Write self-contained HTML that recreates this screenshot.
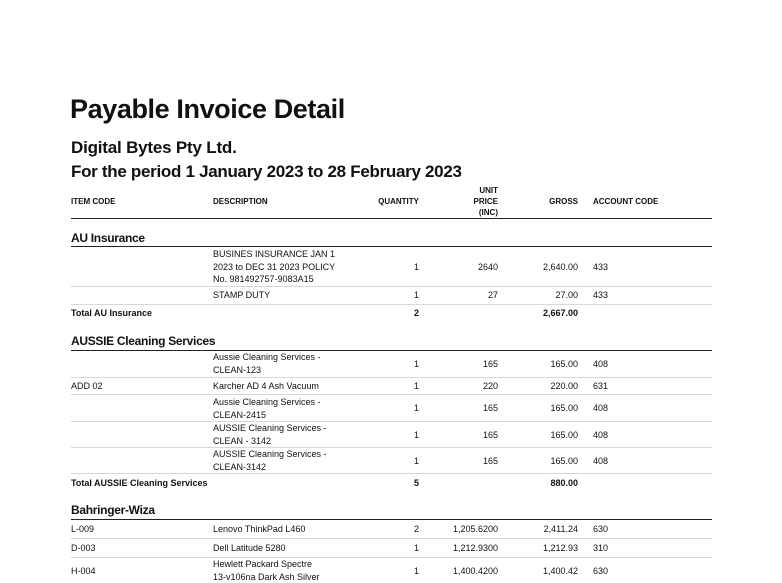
<!DOCTYPE html>
<html><head><meta charset="utf-8"><style>
body{margin:0;width:782px;height:581px;overflow:hidden;background:#fff;font-family:"Liberation Sans",sans-serif;color:#111;position:relative}
div{position:absolute;white-space:nowrap}
.t{font-size:9px;line-height:12px}
.b{font-weight:bold}
.r{text-align:right}
.hl{left:71px;width:641px;height:1px;background:#222}
.gl{left:71px;width:641px;height:1px;background:#d8d8d8}
.sec{font-size:12px;font-weight:bold;left:71px;letter-spacing:-0.3px}
</style></head><body>
<div style="left:70px;top:94px;font-size:27px;font-weight:bold;letter-spacing:-0.4px">Payable Invoice Detail</div>
<div style="left:71px;top:138px;font-size:17px;font-weight:bold;letter-spacing:-0.2px">Digital Bytes Pty Ltd.</div>
<div style="left:71px;top:162px;font-size:17px;font-weight:bold;letter-spacing:-0.3px">For the period 1 January 2023 to 28 February 2023</div>

<div class="t b" style="left:71px;top:196px;font-size:8px">ITEM CODE</div>
<div class="t b" style="left:213px;top:196px;font-size:8px">DESCRIPTION</div>
<div class="t b r" style="left:360px;width:59px;top:196px;font-size:8px">QUANTITY</div>
<div class="t b r" style="left:440px;width:58px;top:185px;font-size:8px;line-height:11px">UNIT<br>PRICE<br>(INC)</div>
<div class="t b r" style="left:520px;width:58px;top:196px;font-size:8px">GROSS</div>
<div class="t b" style="left:593px;top:196px;font-size:8px">ACCOUNT CODE</div>
<div class="hl" style="top:218px"></div>

<div class="sec" style="top:231px">AU Insurance</div>
<div class="hl" style="top:246px"></div>
<div class="t" style="left:213px;top:248px;line-height:12.5px">BUSINES INSURANCE JAN 1<br>2023 to DEC 31 2023 POLICY<br>No. 981492757-9083A15</div>
<div class="t r" style="left:380px;width:39px;top:261px">1</div>
<div class="t r" style="left:440px;width:58px;top:261px">2640</div>
<div class="t r" style="left:520px;width:58px;top:261px">2,640.00</div>
<div class="t" style="left:593px;top:261px">433</div>
<div class="gl" style="top:286px"></div>
<div class="t" style="left:213px;top:289px">STAMP DUTY</div>
<div class="t r" style="left:380px;width:39px;top:289px">1</div>
<div class="t r" style="left:440px;width:58px;top:289px">27</div>
<div class="t r" style="left:520px;width:58px;top:289px">27.00</div>
<div class="t" style="left:593px;top:289px">433</div>
<div class="gl" style="top:304px"></div>
<div class="t b" style="left:71px;top:307px">Total AU Insurance</div>
<div class="t b r" style="left:380px;width:39px;top:307px">2</div>
<div class="t b r" style="left:520px;width:58px;top:307px">2,667.00</div>

<div class="sec" style="top:334px">AUSSIE Cleaning Services</div>
<div class="hl" style="top:350px"></div>

<div class="t" style="left:213px;top:351px;line-height:12.5px">Aussie Cleaning Services -<br>CLEAN-123</div>
<div class="t r" style="left:380px;width:39px;top:358px">1</div>
<div class="t r" style="left:440px;width:58px;top:358px">165</div>
<div class="t r" style="left:520px;width:58px;top:358px">165.00</div>
<div class="t" style="left:593px;top:358px">408</div>
<div class="gl" style="top:377px"></div>

<div class="t" style="left:71px;top:380px">ADD 02</div>
<div class="t" style="left:213px;top:380px">Karcher AD 4 Ash Vacuum</div>
<div class="t r" style="left:380px;width:39px;top:380px">1</div>
<div class="t r" style="left:440px;width:58px;top:380px">220</div>
<div class="t r" style="left:520px;width:58px;top:380px">220.00</div>
<div class="t" style="left:593px;top:380px">631</div>
<div class="gl" style="top:394px"></div>

<div class="t" style="left:213px;top:396px;line-height:12.5px">Aussie Cleaning Services -<br>CLEAN-2415</div>
<div class="t r" style="left:380px;width:39px;top:402px">1</div>
<div class="t r" style="left:440px;width:58px;top:402px">165</div>
<div class="t r" style="left:520px;width:58px;top:402px">165.00</div>
<div class="t" style="left:593px;top:402px">408</div>
<div class="gl" style="top:421px"></div>

<div class="t" style="left:213px;top:422px;line-height:12.5px">AUSSIE Cleaning Services -<br>CLEAN - 3142</div>
<div class="t r" style="left:380px;width:39px;top:429px">1</div>
<div class="t r" style="left:440px;width:58px;top:429px">165</div>
<div class="t r" style="left:520px;width:58px;top:429px">165.00</div>
<div class="t" style="left:593px;top:429px">408</div>
<div class="gl" style="top:447px"></div>

<div class="t" style="left:213px;top:448px;line-height:12.5px">AUSSIE Cleaning Services -<br>CLEAN-3142</div>
<div class="t r" style="left:380px;width:39px;top:455px">1</div>
<div class="t r" style="left:440px;width:58px;top:455px">165</div>
<div class="t r" style="left:520px;width:58px;top:455px">165.00</div>
<div class="t" style="left:593px;top:455px">408</div>
<div class="gl" style="top:473px"></div>

<div class="t b" style="left:71px;top:477px">Total AUSSIE Cleaning Services</div>
<div class="t b r" style="left:380px;width:39px;top:477px">5</div>
<div class="t b r" style="left:520px;width:58px;top:477px">880.00</div>

<div class="sec" style="top:503px">Bahringer-Wiza</div>
<div class="hl" style="top:519px"></div>

<div class="t" style="left:71px;top:523px">L-009</div>
<div class="t" style="left:213px;top:523px">Lenovo ThinkPad L460</div>
<div class="t r" style="left:380px;width:39px;top:523px">2</div>
<div class="t r" style="left:420px;width:78px;top:523px">1,205.6200</div>
<div class="t r" style="left:520px;width:58px;top:523px">2,411.24</div>
<div class="t" style="left:593px;top:523px">630</div>
<div class="gl" style="top:538px"></div>

<div class="t" style="left:71px;top:542px">D-003</div>
<div class="t" style="left:213px;top:542px">Dell Latitude 5280</div>
<div class="t r" style="left:380px;width:39px;top:542px">1</div>
<div class="t r" style="left:420px;width:78px;top:542px">1,212.9300</div>
<div class="t r" style="left:520px;width:58px;top:542px">1,212.93</div>
<div class="t" style="left:593px;top:542px">310</div>
<div class="gl" style="top:557px"></div>

<div class="t" style="left:71px;top:565px">H-004</div>
<div class="t" style="left:213px;top:558px;line-height:12.5px">Hewlett Packard Spectre<br>13-v106na Dark Ash Silver</div>
<div class="t r" style="left:380px;width:39px;top:565px">1</div>
<div class="t r" style="left:420px;width:78px;top:565px">1,400.4200</div>
<div class="t r" style="left:520px;width:58px;top:565px">1,400.42</div>
<div class="t" style="left:593px;top:565px">630</div>
</body></html>
